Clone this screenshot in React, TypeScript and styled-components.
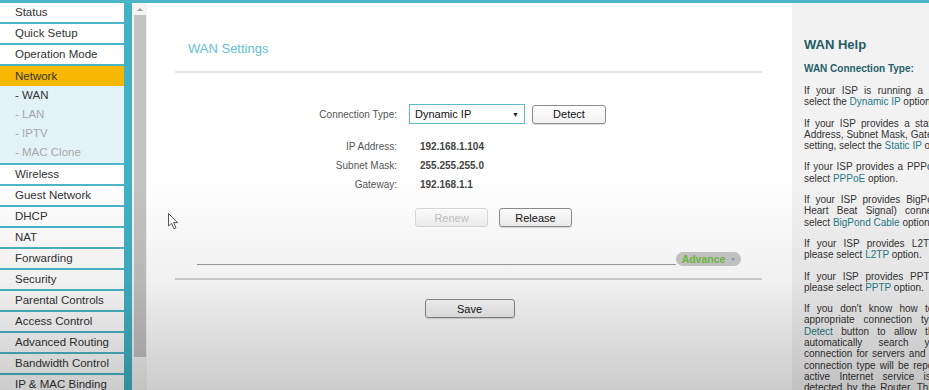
import React from 'react';
import styled, { createGlobalStyle } from 'styled-components';

const GlobalStyle = createGlobalStyle`
  html, body {
    margin: 0;
    padding: 0;
    background: #ffffff;
    overflow: hidden;
  }
  body {
    font-family: "Liberation Sans", Arial, sans-serif;
  }
`;

const mainMenu = ['Status', 'Quick Setup', 'Operation Mode'];
const lowerMenu = [
  'Wireless',
  'Guest Network',
  'DHCP',
  'NAT',
  'Forwarding',
  'Security',
  'Parental Controls',
  'Access Control',
  'Advanced Routing',
  'Bandwidth Control',
  'IP & MAC Binding',
];
const subMenu = ['WAN', 'LAN', 'IPTV', 'MAC Clone'];

const info = [
  { label: 'IP Address:', value: '192.168.1.104' },
  { label: 'Subnet Mask:', value: '255.255.255.0' },
  { label: 'Gateway:', value: '192.168.1.1' },
];

function App() {
  return (
    <Page>
      <GlobalStyle />
      <Sidebar>
        {mainMenu.map((item) => (
          <NavItem key={item}>{item}</NavItem>
        ))}
        <NavItem $active>Network</NavItem>
        <SubMenu>
          {subMenu.map((item, i) => (
            <SubItem key={item} $current={i === 0}>
              - {item}
            </SubItem>
          ))}
        </SubMenu>
        {lowerMenu.map((item) => (
          <NavItem key={item}>{item}</NavItem>
        ))}
      </Sidebar>

      <Gutter>
        <ScrollArrow />
        <ScrollThumb />
      </Gutter>

      <Main>
        <Title>WAN Settings</Title>
        <Rule />
        <Form>
          <Label>Connection Type:</Label>
          <Field>
            <Select>
              <span>Dynamic IP</span>
              <Caret>▼</Caret>
            </Select>
            <Button $width={74}>Detect</Button>
          </Field>
        </Form>
        <InfoGrid>
          {info.map((row) => (
            <React.Fragment key={row.label}>
              <InfoLabel>{row.label}</InfoLabel>
              <Value>{row.value}</Value>
            </React.Fragment>
          ))}
        </InfoGrid>
        <ButtonRow>
          <Button $width={73} disabled>
            Renew
          </Button>
          <Button $width={73}>Release</Button>
        </ButtonRow>
        <AdvanceRow>
          <AdvanceLine />
          <AdvancePill>
            Advance <small>▼</small>
          </AdvancePill>
        </AdvanceRow>
        <Rule $bottom />
        <SaveRow>
          <Button $width={90}>Save</Button>
        </SaveRow>
      </Main>

      <Help>
        <HelpTitle>WAN Help</HelpTitle>
        <HelpSub>WAN Connection Type:</HelpSub>
        <HelpText>
          If your ISP is running a DHCP server, select the <Em>Dynamic IP</Em> option.
        </HelpText>
        <HelpText>
          If your ISP provides a static or fixed IP Address, Subnet Mask, Gateway and DNS
          setting, select the <Em>Static IP</Em> option.
        </HelpText>
        <HelpText>
          If your ISP provides a PPPoE connection, select <Em>PPPoE</Em> option.
        </HelpText>
        <HelpText>
          If your ISP provides BigPond Cable (or Heart Beat Signal) connection, please select{' '}
          <Em>BigPond Cable</Em> option.
        </HelpText>
        <HelpText>
          If your ISP provides L2TP connection, please select <Em>L2TP</Em> option.
        </HelpText>
        <HelpText>
          If your ISP provides PPTP connection, please select <Em>PPTP</Em> option.
        </HelpText>
        <HelpText>
          If you don't know how to choose the appropriate connection type, click the{' '}
          <Em>Detect</Em> button to allow the Router to automatically search your Internet
          connection for servers and protocols. The connection type will be reported when an
          active Internet service is successfully detected by the Router. This report is for
          your reference only.
        </HelpText>
      </Help>

      <Vignette />
      <Cursor width="11" height="17" viewBox="0 0 11 17">
        <path
          d="M0.5 0.5 L0.5 13 L3.5 10.3 L6 15.8 L8 14.9 L5.6 9.6 L9.6 9.6 Z"
          fill="#ffffff"
          stroke="#555"
          strokeWidth="1"
          strokeLinejoin="round"
        />
      </Cursor>
    </Page>
  );
}

const teal = '#4ab6c8';

const Page = styled.div`
  position: relative;
  width: 929px;
  height: 390px;
  box-sizing: border-box;
  border-top: 3px solid ${teal};
  display: flex;
  overflow: hidden;
  background: #ffffff;
`;

const Sidebar = styled.nav`
  flex: 0 0 124px;
  display: flex;
  flex-direction: column;
  background: ${teal};
  border-right: 8px solid #42b1c4;
`;

const NavItem = styled.div<{ $active?: boolean }>`
  flex: 0 0 auto;
  height: ${(p) => (p.$active ? 20 : 19)}px;
  line-height: ${(p) => (p.$active ? 20 : 19)}px;
  margin-bottom: ${(p) => (p.$active ? 0 : 2)}px;
  padding-left: 15px;
  font-size: 11.5px;
  color: #333;
  background: ${(p) => (p.$active ? '#f6b800' : '#ffffff')};
  white-space: nowrap;
`;

const SubMenu = styled.div`
  flex: 0 0 auto;
  display: flex;
  flex-direction: column;
  background: #e2f3f7;
  padding-bottom: 1px;
  margin-bottom: 2px;
`;

const SubItem = styled.div<{ $current?: boolean }>`
  height: 19px;
  line-height: 19px;
  padding-left: 15px;
  font-size: 11.5px;
  color: ${(p) => (p.$current ? '#333' : '#a8a8a8')};
`;

const Gutter = styled.div`
  position: relative;
  flex: 0 0 15px;
  box-sizing: border-box;
  padding: 0 1px 0 2px;
  display: flex;
  flex-direction: column;
  background: #f4f4f4;
`;

const ScrollArrow = styled.div`
  height: 12px;
  display: flex;
  align-items: center;
  justify-content: center;
  &::before {
    content: '';
    border-left: 3px solid transparent;
    border-right: 3px solid transparent;
    border-bottom: 3px solid #a0a0a0;
  }
`;

const ScrollThumb = styled.div`
  height: 342px;
  background: #c3c3c3;
`;

const Main = styled.main`
  flex: 0 0 645px;
  display: flex;
  flex-direction: column;
  background: #ffffff;
`;

const Title = styled.h1`
  margin: 38px 0 0 41px;
  font-size: 13px;
  line-height: 16px;
  font-weight: normal;
  color: #63c1d3;
`;

const Rule = styled.div<{ $bottom?: boolean }>`
  margin: ${(p) => (p.$bottom ? 12 : 14)}px 0 0 28px;
  width: 587px;
  height: 2px;
  background: ${(p) => (p.$bottom ? '#d4d4d4' : '#e4e4e4')};
`;

const Form = styled.div`
  margin-top: 31px;
  display: grid;
  grid-template-columns: 250px 1fr;
  column-gap: 12px;
  align-items: center;
`;

const Label = styled.div`
  text-align: right;
  font-size: 10px;
  color: #555;
`;

const Field = styled.div`
  display: flex;
  align-items: center;
  gap: 7px;
`;

const Select = styled.div`
  box-sizing: border-box;
  width: 116px;
  height: 20px;
  border: 1px solid #5db9cb;
  padding: 0 5px 0 5px;
  display: flex;
  align-items: center;
  justify-content: space-between;
  font-size: 11px;
  color: #111;
  background: #fff;
`;

const Caret = styled.span`
  font-size: 7px;
  color: #222;
`;

const Button = styled.button<{ $width: number }>`
  box-sizing: border-box;
  width: ${(p) => p.$width}px;
  height: 19px;
  padding: 0;
  border: 1px solid ${(p) => (p.disabled ? '#dadada' : '#8c8c8c')};
  border-radius: 3px;
  background: linear-gradient(#ffffff, #f1f1f1);
  box-shadow: ${(p) => (p.disabled ? 'none' : '0 1px 1px rgba(0, 0, 0, 0.15)')};
  font-family: "Liberation Sans", Arial, sans-serif;
  font-size: 11px;
  color: ${(p) => (p.disabled ? '#c4c4c4' : '#111')};
`;

const InfoGrid = styled.div`
  margin-top: 13px;
  display: grid;
  grid-template-columns: 250px 1fr;
  column-gap: 23px;
  grid-auto-rows: 19px;
  align-items: center;
`;

const InfoLabel = styled(Label)`
  line-height: 19px;
`;

const Value = styled.div`
  font-size: 10px;
  font-weight: bold;
  color: #444;
`;

const ButtonRow = styled.div`
  margin: 14px 0 0 268px;
  display: flex;
  gap: 11px;
`;

const AdvanceRow = styled.div`
  margin: 25px 0 0 50px;
  width: 544px;
  height: 14px;
  display: flex;
  align-items: flex-end;
`;

const AdvanceLine = styled.div`
  flex: 1;
  height: 1px;
  margin-bottom: 1px;
  background: #9d9d9d;
`;

const AdvancePill = styled.div`
  width: 65px;
  height: 14px;
  border-radius: 7px;
  background: #c9c9c9;
  display: flex;
  align-items: center;
  justify-content: center;
  gap: 5px;
  font-size: 10.5px;
  font-weight: bold;
  color: #6fbd3f;
  small {
    font-size: 5px;
    color: #7c9c8c;
  }
`;

const SaveRow = styled.div`
  margin-top: 19px;
  display: flex;
  justify-content: center;
`;

const Help = styled.aside`
  flex: 0 0 214px;
  box-sizing: border-box;
  padding: 34px 12px 0 12px;
  background: #f2f2f2;
`;

const HelpTitle = styled.h2`
  margin: 0;
  font-size: 13px;
  line-height: 16px;
  font-weight: bold;
  color: #1f5c67;
`;

const HelpSub = styled.h3`
  margin: 10px 0 0;
  font-size: 10px;
  line-height: 12px;
  font-weight: bold;
  color: #245f6a;
`;

const HelpText = styled.p`
  margin: 10px 0 10px;
  width: 190px;
  font-size: 10px;
  line-height: 11.3px;
  text-align: justify;
  color: #333;
  & + & {
    margin-top: 0;
  }
`;

const Em = styled.span`
  color: #1f7a84;
`;

const Vignette = styled.div`
  position: absolute;
  inset: 0;
  pointer-events: none;
  background: linear-gradient(
    to bottom,
    rgba(0, 0, 0, 0) 0%,
    rgba(0, 0, 0, 0) 45%,
    rgba(0, 0, 0, 0.06) 72%,
    rgba(0, 0, 0, 0.2) 100%
  );
`;

const Cursor = styled.svg`
  position: absolute;
  left: 168px;
  top: 210px;
  pointer-events: none;
`;

export default App;
